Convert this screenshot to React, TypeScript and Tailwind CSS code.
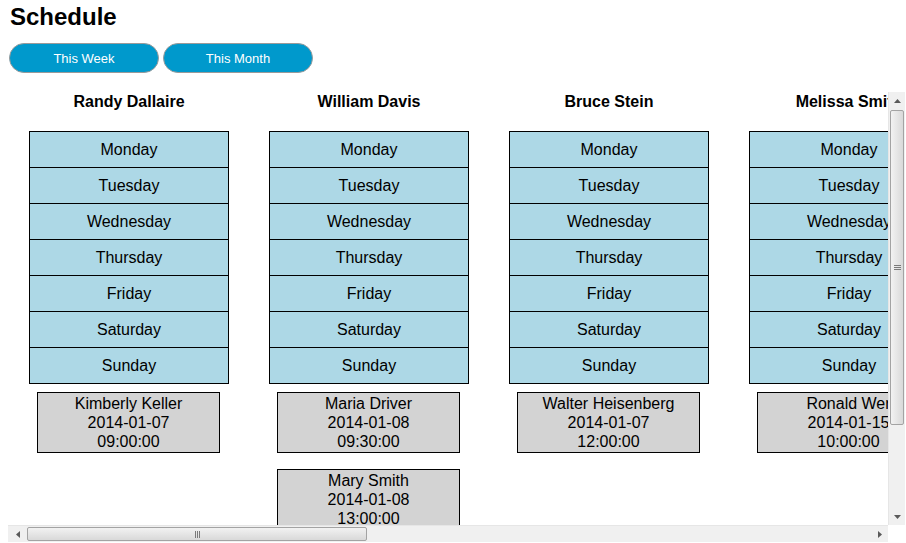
import type { ReactNode } from "react";

const DAYS = ["Monday", "Tuesday", "Wednesday", "Thursday", "Friday", "Saturday", "Sunday"];

type Appt = { client: string; date: string; time: string };

const STAFF: { name: string; appts: Appt[] }[] = [
  { name: "Randy Dallaire", appts: [{ client: "Kimberly Keller", date: "2014-01-07", time: "09:00:00" }] },
  {
    name: "William Davis",
    appts: [
      { client: "Maria Driver", date: "2014-01-08", time: "09:30:00" },
      { client: "Mary Smith", date: "2014-01-08", time: "13:00:00" },
    ],
  },
  { name: "Bruce Stein", appts: [{ client: "Walter Heisenberg", date: "2014-01-07", time: "12:00:00" }] },
  { name: "Melissa Smith", appts: [{ client: "Ronald Wer", date: "2014-01-15", time: "10:00:00" }] },
  { name: "John Carter", appts: [{ client: "Linda Moore", date: "2014-01-09", time: "11:00:00" }] },
  { name: "Susan Clark", appts: [] },
  { name: "Peter Lang", appts: [{ client: "Anna Brooks", date: "2014-01-10", time: "14:30:00" }] },
  { name: "Karen White", appts: [] },
];

function Tri({ dir }: { dir: "up" | "down" | "left" | "right" }) {
  const pts = {
    up: "0,4 7,4 3.5,0",
    down: "0,0 7,0 3.5,4",
    left: "4,0 4,7 0,3.5",
    right: "0,0 0,7 4,3.5",
  }[dir];
  const vert = dir === "up" || dir === "down";
  return (
    <svg width={vert ? 7 : 4} height={vert ? 4 : 7} viewBox={vert ? "0 0 7 4" : "0 0 4 7"}>
      <polygon points={pts} fill="#5a5a5a" />
    </svg>
  );
}

function ScrollBtn({ className, children }: { className: string; children: ReactNode }) {
  return <div className={`flex shrink-0 items-center justify-center ${className}`}>{children}</div>;
}

function Column({ name, appts }: { name: string; appts: Appt[] }) {
  return (
    <div className="flex w-[240px] shrink-0 flex-col items-center">
      <div className="h-[19px] whitespace-nowrap pt-px text-[16px] font-bold leading-[18px]">{name}</div>
      <div className="mt-[20px] w-[200px] border border-black bg-[#add8e6]">
        {DAYS.map((d, i) => (
          <div
            key={d}
            className={`flex items-center justify-center text-[16px] ${
              i < DAYS.length - 1 ? "h-[36px] border-b border-black" : "h-[35px]"
            }`}
          >
            {d}
          </div>
        ))}
      </div>
      <div className="ml-[28px] mt-2 flex flex-col gap-4 self-start">
        {appts.map((a) => (
          <div
            key={a.client + a.time}
            className="w-[183px] border border-black bg-[#d3d3d3] py-px text-center text-[16px] leading-[19px]"
          >
            <div className="whitespace-nowrap">{a.client}</div>
            <div>{a.date}</div>
            <div>{a.time}</div>
          </div>
        ))}
      </div>
    </div>
  );
}

export default function App() {
  return (
    <div className="h-[543px] w-[906px] overflow-hidden bg-white font-['Liberation_Sans',Arial,sans-serif] text-black">
      <h1 className="pl-[10px] pt-[3px] text-[24px] font-bold leading-[28px]">Schedule</h1>

      <div className="ml-[9px] mt-[12px] flex gap-[4px]">
        {["This Week", "This Month"].map((l) => (
          <button
            key={l}
            className="h-[30px] w-[150px] rounded-full border border-[#9a9a9a] bg-[#0099cc] pt-px text-[13px] text-white"
          >
            {l}
          </button>
        ))}
      </div>

      <div className="ml-2 mt-[19px] grid h-[450px] w-[897px] grid-cols-[880px_17px] grid-rows-[433px_17px]">
        <div className="overflow-hidden">
          <div className="flex pl-px">
            {STAFF.map((s) => (
              <Column key={s.name} name={s.name} appts={s.appts} />
            ))}
          </div>
        </div>

        {/* vertical scrollbar */}
        <div className="flex flex-col border-l border-[#e6e6e6] bg-[#f0f0f0]">
          <ScrollBtn className="h-[17px]">
            <Tri dir="up" />
          </ScrollBtn>
          <div className="mx-px mt-px flex h-[315px] items-center justify-center rounded-[2px] border border-[#a3a3a3] bg-gradient-to-r from-[#f2f2f2] to-[#d9d9d9]">
            <div className="flex flex-col gap-px">
              <div className="h-px w-[7px] bg-[#7a7a7a]" />
              <div className="h-px w-[7px] bg-[#7a7a7a]" />
              <div className="h-px w-[7px] bg-[#7a7a7a]" />
            </div>
          </div>
          <div className="flex-1" />
          <ScrollBtn className="h-[17px]">
            <Tri dir="down" />
          </ScrollBtn>
        </div>

        {/* horizontal scrollbar */}
        <div className="flex border-t border-[#e6e6e6] bg-[#f0f0f0]">
          <ScrollBtn className="w-[19px]">
            <Tri dir="left" />
          </ScrollBtn>
          <div className="my-px flex w-[340px] items-center justify-center rounded-[2px] border border-[#a3a3a3] bg-gradient-to-b from-[#f2f2f2] to-[#d9d9d9]">
            <div className="flex gap-px">
              <div className="h-[7px] w-px bg-[#7a7a7a]" />
              <div className="h-[7px] w-px bg-[#7a7a7a]" />
              <div className="h-[7px] w-px bg-[#7a7a7a]" />
            </div>
          </div>
          <div className="flex-1" />
          <ScrollBtn className="w-[17px]">
            <Tri dir="right" />
          </ScrollBtn>
        </div>
        <div className="bg-white" />
      </div>
    </div>
  );
}
